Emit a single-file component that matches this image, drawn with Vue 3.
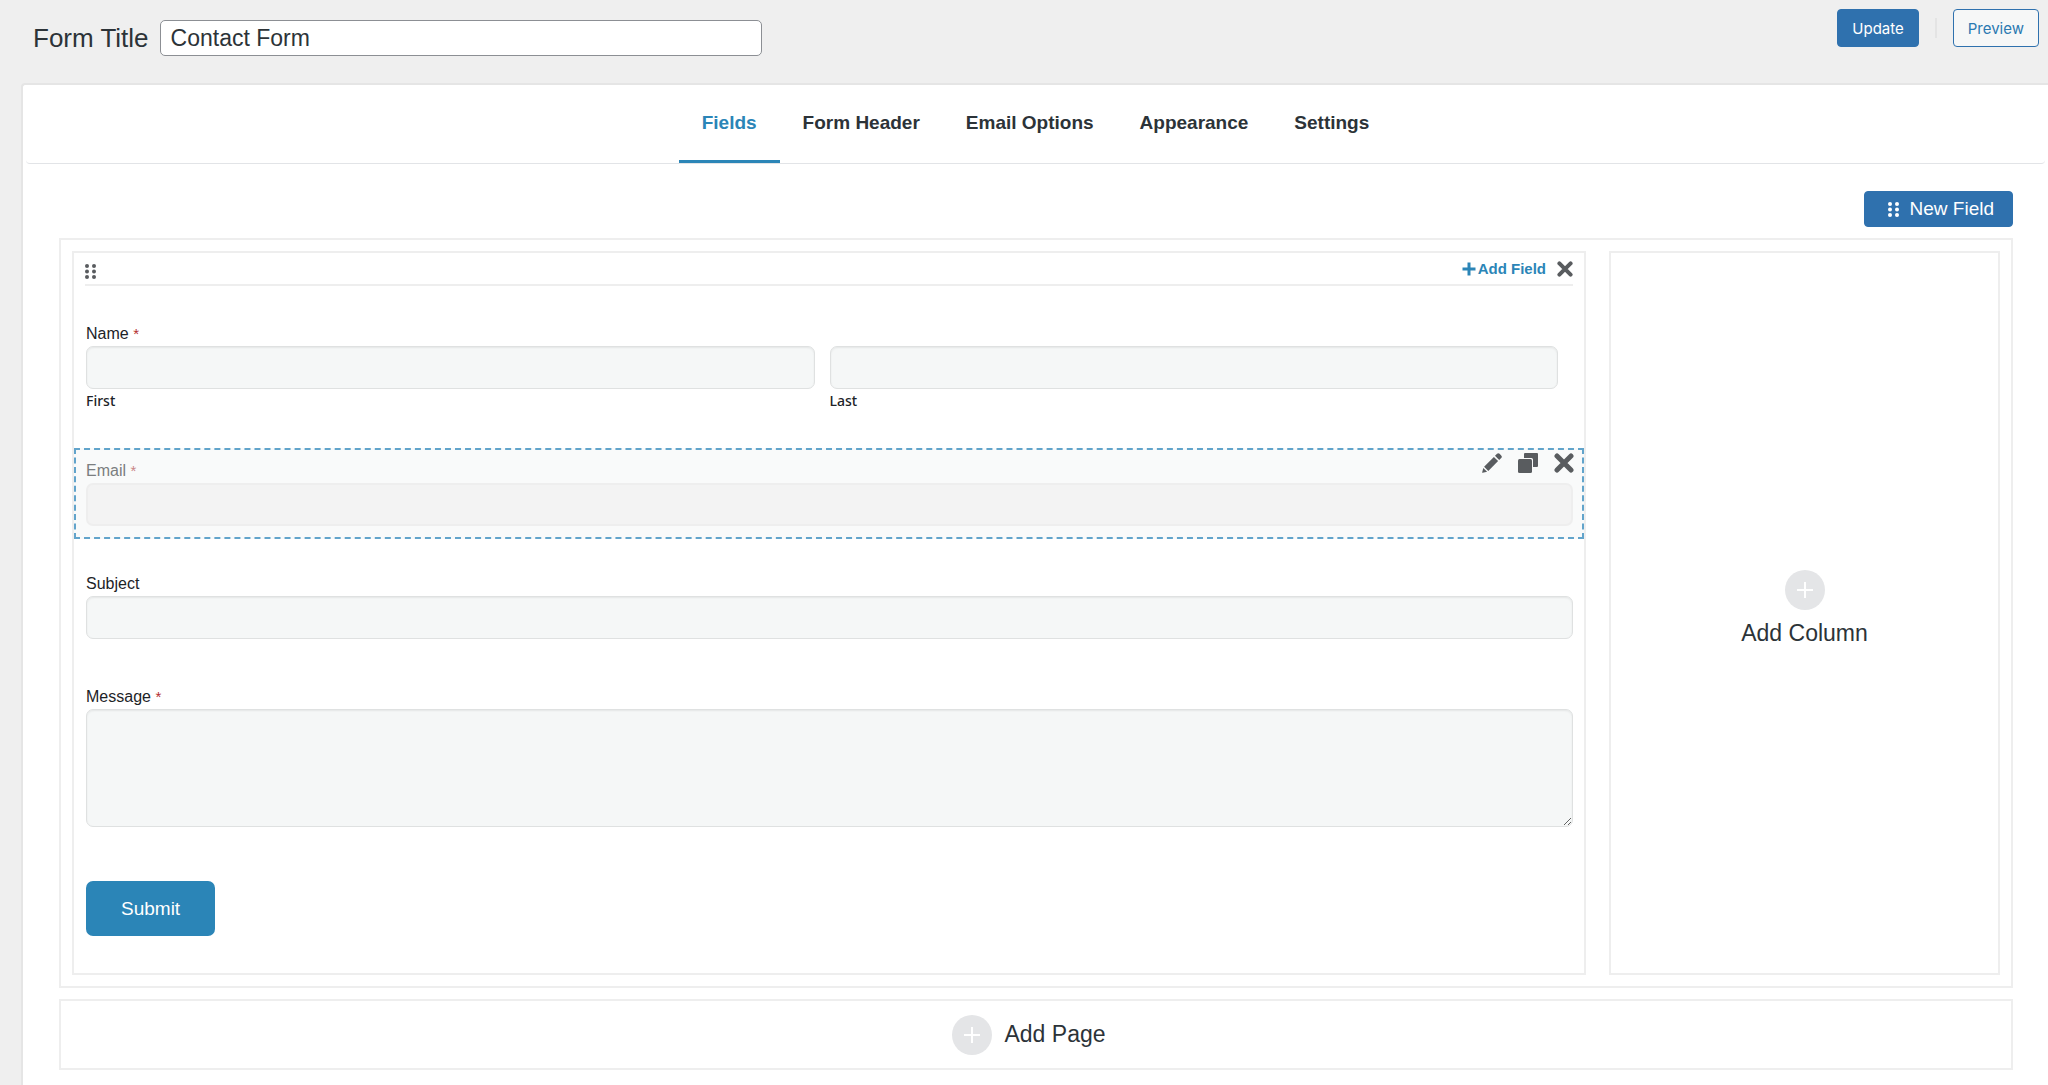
<script setup>
import { ref } from "vue";

const formTitle = ref("Contact Form");
const activeTab = ref("fields");

const tabs = [
  { id: "fields", label: "Fields" },
  { id: "header", label: "Form Header" },
  { id: "email", label: "Email Options" },
  { id: "appearance", label: "Appearance" },
  { id: "settings", label: "Settings" },
];

const fields = [
  {
    id: "name",
    label: "Name",
    type: "name",
    required: true,
    parts: ["First", "Last"],
  },
  { id: "email", label: "Email", type: "text", required: true, selected: true },
  { id: "subject", label: "Subject", type: "text" },
  { id: "message", label: "Message", type: "textarea", required: true },
];
</script>

<template>
  <div class="app">
    <header class="top">
      <div class="title">
        <label for="form-title">Form Title</label>
        <input id="form-title" v-model="formTitle" type="text" />
      </div>
      <div class="actions">
        <button type="button" class="btn primary">Update</button>
        <span class="divider"></span>
        <button type="button" class="btn">Preview</button>
      </div>
    </header>

    <main class="panel">
      <nav class="tabs">
        <a
          v-for="tab in tabs"
          :key="tab.id"
          href="#"
          :class="{ active: activeTab === tab.id }"
          @click.prevent="activeTab = tab.id"
          >{{ tab.label }}</a
        >
      </nav>

      <div class="content">
        <button type="button" class="new-field">
          <svg class="dots" viewBox="0 0 11 15" aria-hidden="true">
            <circle cx="2" cy="2" r="2" />
            <circle cx="9" cy="2" r="2" />
            <circle cx="2" cy="7.5" r="2" />
            <circle cx="9" cy="7.5" r="2" />
            <circle cx="2" cy="13" r="2" />
            <circle cx="9" cy="13" r="2" />
          </svg>
          New Field
        </button>

        <section class="page">
          <div class="column">
            <div class="column-bar">
              <button type="button" class="icon drag" aria-label="Move column">
                <svg class="dots" viewBox="0 0 11 15">
                  <circle cx="2" cy="2" r="2" />
                  <circle cx="9" cy="2" r="2" />
                  <circle cx="2" cy="7.5" r="2" />
                  <circle cx="9" cy="7.5" r="2" />
                  <circle cx="2" cy="13" r="2" />
                  <circle cx="9" cy="13" r="2" />
                </svg>
              </button>
              <div class="column-actions">
                <button type="button" class="add-field">
                  <svg viewBox="0 0 14 14" aria-hidden="true">
                    <path d="M7 .5v13M.5 7h13" />
                  </svg>
                  Add Field
                </button>
                <button type="button" class="icon" aria-label="Delete column">
                  <svg class="close" viewBox="0 0 20 20">
                    <path d="M3 3l14 14M17 3L3 17" />
                  </svg>
                </button>
              </div>
            </div>

            <form class="fields" @submit.prevent>
              <div
                v-for="field in fields"
                :key="field.id"
                class="field"
                :class="{ selected: field.selected }"
              >
                <div v-if="field.selected" class="tools">
                  <button type="button" class="icon" aria-label="Edit field">
                    <svg viewBox="0 0 20 20">
                      <path
                        d="M13 2.800L15 .8q1.300-1.300 2.600 0l1.600 1.600q1.300 1.300 0 2.600L17.200 7zM11.900 3.900l4.200 4.200L6.300 17.900l-4.200-4.200zM1.300 14.900l3.800 3.800-4.300 1.100q-.8.2-.6-.6z"
                      />
                    </svg>
                  </button>
                  <button type="button" class="icon" aria-label="Duplicate field">
                    <svg viewBox="0 0 20 20">
                      <path
                        d="M7 0h12q1 0 1 1v12q0 1-1 1h-4V6.500q0-1.500-1.500-1.500H6V1q0-1 1-1z"
                      />
                      <rect y="6" width="14" height="14" rx="1.500" />
                    </svg>
                  </button>
                  <button type="button" class="icon" aria-label="Delete field">
                    <svg class="close" viewBox="0 0 20 20">
                      <path d="M3 3l14 14M17 3L3 17" />
                    </svg>
                  </button>
                </div>

                <fieldset v-if="field.type === 'name'">
                  <legend>{{ field.label }} <span class="req">*</span></legend>
                  <div class="name-row">
                    <div v-for="part in field.parts" :key="part">
                      <input :id="'name-' + part" type="text" />
                      <label :for="'name-' + part" class="sub">{{ part }}</label>
                    </div>
                  </div>
                </fieldset>
                <template v-else>
                  <label :for="field.id"
                    >{{ field.label }}
                    <span v-if="field.required" class="req">*</span></label
                  >
                  <textarea
                    v-if="field.type === 'textarea'"
                    :id="field.id"
                  ></textarea>
                  <input v-else :id="field.id" type="text" />
                </template>
              </div>
              <div class="submit-row">
                <button type="submit" class="submit">Submit</button>
              </div>
            </form>
          </div>

          <button type="button" class="add-column">
            <svg class="plus" viewBox="0 0 40 40" aria-hidden="true">
              <circle cx="20" cy="20" r="20" />
              <path d="M20 12v16M12 20h16" />
            </svg>
            Add Column
          </button>
        </section>

        <button type="button" class="add-page">
          <svg class="plus" viewBox="0 0 40 40" aria-hidden="true">
            <circle cx="20" cy="20" r="20" />
            <path d="M20 12v16M12 20h16" />
          </svg>
          Add Page
        </button>
      </div>
    </main>
  </div>
</template>

<style>
body {
  margin: 0;
  background: #efefef;
}
</style>

<style scoped>
* {
  box-sizing: border-box;
}
.app {
  display: flex;
  flex-direction: column;
  min-height: 100vh;
  font-family: "Liberation Sans", Arial, sans-serif;
  color: #2c3338;
}
button,
input,
textarea {
  font-family: inherit;
  color: inherit;
}
button {
  cursor: pointer;
}
svg {
  display: block;
  fill: currentColor;
}

/* top bar */
.top {
  display: flex;
  justify-content: space-between;
  align-items: flex-start;
  height: 83px;
  padding: 0 9px 0 33px;
}
.title {
  display: flex;
  align-items: center;
  gap: 11px;
  padding-top: 20px;
}
.title label {
  font-size: 26px;
  line-height: 36px;
}
.title input {
  width: 602px;
  height: 36px;
  padding: 0 10px;
  border: 1px solid #8c8f94;
  border-radius: 5px;
  background: #fff;
  font-size: 23px;
}
.actions {
  display: flex;
  align-items: center;
  gap: 16px;
  padding-top: 9px;
}
.btn {
  height: 38px;
  padding: 0 14px;
  border: 1px solid #2f71ae;
  border-radius: 4px;
  background: #f6f7f7;
  color: #2b79b1;
  font-family: Inter, sans-serif;
  font-size: 15px;
}
.btn.primary {
  background: #2f71ae;
  color: #fff;
}
.divider {
  width: 2px;
  height: 20px;
  background: #e4e4e4;
}

/* panel and tabs */
.panel {
  flex: 1;
  margin-left: 21px;
  border: 2px solid #e5e5e5;
  border-width: 2px 0 0 2px;
  border-radius: 4px 0 0 0;
  background: #fff;
}
.tabs {
  display: flex;
  justify-content: center;
  margin: 0 3px;
  border-bottom: 1px solid #e2e4e7;
  border-radius: 0 0 4px 4px;
}
.tabs a {
  height: 78px;
  padding: 0 23px;
  border-bottom: 3px solid transparent;
  color: inherit;
  font-size: 19px;
  font-weight: bold;
  line-height: 75px;
  text-decoration: none;
}
.tabs a.active {
  border-color: #2b85b7;
  color: #2b85b7;
}
.content {
  display: flex;
  flex-direction: column;
  gap: 11px;
  padding: 27px 35px 15px 36px;
}
.new-field {
  display: flex;
  align-items: center;
  align-self: flex-end;
  gap: 11px;
  height: 36px;
  padding: 0 18px 0 23px;
  border: 1px solid #2f71ae;
  border-radius: 4px;
  background: #2f71ae;
  color: #fff;
  font-size: 19px;
}
.dots {
  width: 11px;
  height: 15px;
}

/* page grid */
.page {
  display: grid;
  grid-template-columns: minmax(0, 1fr) 391px;
  gap: 23px;
  padding: 11px;
  border: 2px solid #eee;
}
.column {
  border: 2px solid #eee;
}
.column-bar {
  display: flex;
  justify-content: space-between;
  align-items: center;
  height: 33px;
  margin: 0 11px;
  border-bottom: 2px solid #eee;
}
.column-actions {
  display: flex;
  align-items: center;
  gap: 11px;
}
.icon {
  padding: 0;
  border: 0;
  background: none;
  color: #595c5f;
}
.drag {
  padding-top: 5px;
}
.add-field {
  display: flex;
  align-items: center;
  gap: 2px;
  padding: 0;
  border: 0;
  background: none;
  color: #2b85b7;
  font-size: 15px;
  font-weight: bold;
}
.add-field svg {
  width: 14px;
  height: 14px;
  stroke: currentColor;
  stroke-width: 3;
}
.close {
  width: 16px;
  height: 16px;
  stroke: currentColor;
  stroke-width: 5;
  stroke-linecap: round;
}

/* form fields */
.fields {
  display: flex;
  flex-direction: column;
  gap: 22px;
  padding: 25px 0;
}
.field {
  position: relative;
  padding: 9px 9px 11px 10px;
  border: 2px dashed transparent;
}
.field.selected {
  border-color: #62a4cb;
  background: #f9fafa;
}
fieldset {
  min-width: 0;
  margin: 0;
  padding: 0;
  border: 0;
}
legend,
.field label {
  display: block;
  padding: 0;
  font-size: 16px;
  line-height: 24px;
  color: #1d2327;
}
.field .req {
  color: #b32d2e;
  font-size: 15px;
}
.field input,
.field textarea {
  display: block;
  width: 100%;
  height: 43px;
  padding: 8px;
  border: 1px solid #dfe1e1;
  border-radius: 7px;
  background: #f5f7f7;
  box-shadow: inset 0 1px 2px rgba(0, 0, 0, 0.07);
  font-size: 16px;
}
.field textarea {
  height: 118px;
  resize: vertical;
}
.name-row {
  display: grid;
  grid-template-columns: 1fr 1fr;
  gap: 15px;
  padding-right: 15px;
}
.field .sub {
  font-family: "Noto Sans", sans-serif;
  font-size: 14px;
  font-weight: 500;
}
.field.selected label {
  color: #7b7e80;
}
.field.selected .req {
  color: #c98586;
}
.field.selected input {
  border: 2px solid #eee;
  background: #f3f3f3;
  box-shadow: none;
}
.tools {
  position: absolute;
  top: 3px;
  right: 8px;
  display: flex;
  gap: 16px;
}
.tools svg {
  width: 20px;
  height: 20px;
}
.submit-row {
  padding: 19px 12px 12px;
}
.submit {
  height: 55px;
  padding: 0 35px;
  border: 0;
  border-radius: 7px;
  background: #2b85b7;
  color: #fff;
  font-size: 19px;
}

/* add column / add page */
.add-column,
.add-page {
  display: flex;
  align-items: center;
  justify-content: center;
  border: 2px solid #eee;
  background: none;
  font-size: 23px;
}
.add-column {
  flex-direction: column;
  gap: 10px;
  padding-bottom: 10px;
}
.add-page {
  gap: 12px;
  height: 71px;
  padding-right: 20px;
}
.plus {
  width: 40px;
  height: 40px;
  fill: #e4e5e7;
  stroke-width: 2;
}
.plus path {
  stroke: #fff;
}
</style>
